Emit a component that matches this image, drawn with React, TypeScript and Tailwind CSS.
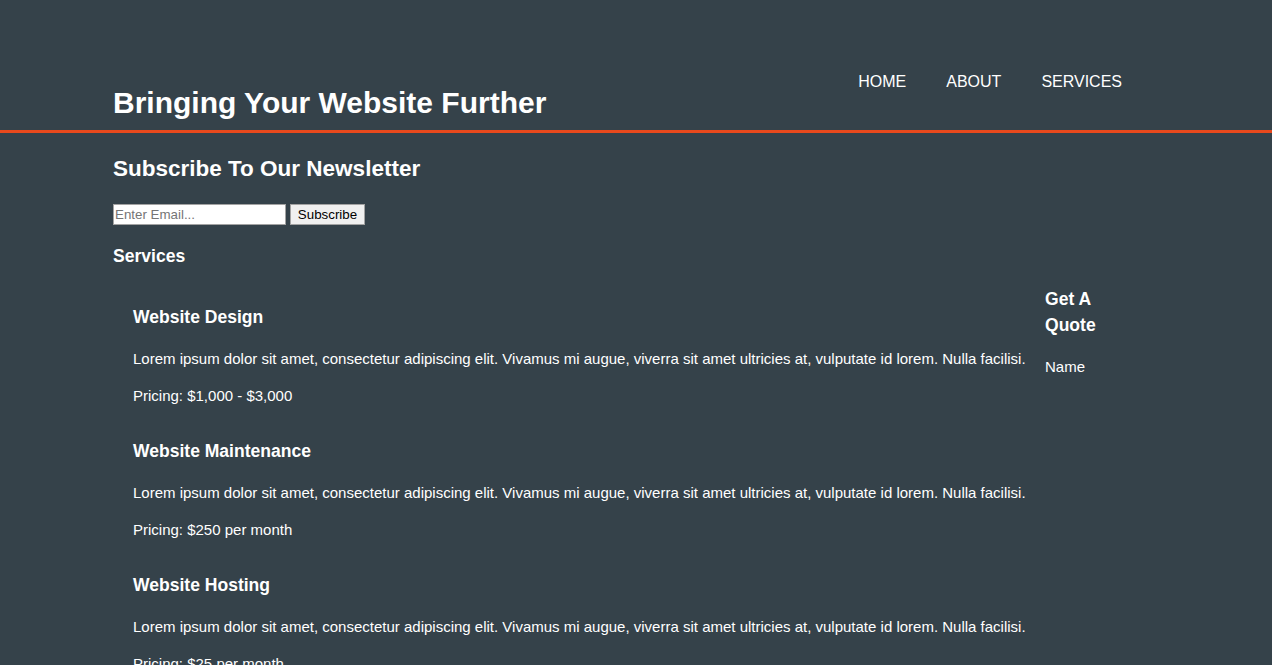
import React from "react";

const services = [
  { title: "Website Design", price: "Pricing: $1,000 - $3,000" },
  { title: "Website Maintenance", price: "Pricing: $250 per month" },
  { title: "Website Hosting", price: "Pricing: $25 per month" },
];

const lorem =
  "Lorem ipsum dolor sit amet, consectetur adipiscing elit. Vivamus mi augue, viverra sit amet ultricies at, vulputate id lorem. Nulla facilisi.";

export default function App() {
  return (
    <div className="min-h-screen bg-[#35424a] font-['Liberation_Sans',Arial,sans-serif] text-[15px] text-white">
      <header className="h-[133px] border-b-[3px] border-[#e8491d]">
        <div className="ml-[113px] flex w-[1029px] justify-between">
          <h1 className="pt-[84px] text-[30px] font-bold leading-[38px]">
            Bringing Your Website Further
          </h1>
          <nav className="pt-[72px]">
            <ul className="flex text-[16px] uppercase leading-[20px]">
              <li className="px-[20px]">Home</li>
              <li className="px-[20px]">About</li>
              <li className="px-[20px]">Services</li>
            </ul>
          </nav>
        </div>
      </header>

      <div className="ml-[113px] w-[1029px]">
        <h2 className="mt-[22px] text-[22.5px] font-bold leading-[28px]">
          Subscribe To Our Newsletter
        </h2>
        <form className="mt-[21px] flex items-center gap-[4px]">
          <input
            type="email"
            placeholder="Enter Email..."
            className="h-[21px] w-[173px] border border-[#a3a3a3] bg-white px-[1px] text-[13.33px] text-black placeholder:text-[#757575]"
          />
          <button
            type="button"
            className="h-[21px] w-[75px] border border-[#a3a3a3] bg-[#f0f0f0] text-[13.33px] text-black"
          >
            Subscribe
          </button>
        </form>
        <h3 className="mt-[20px] text-[17.55px] font-bold leading-[22px]">Services</h3>

        <div className="mt-[23px] flex">
          <section className="flex-1 pl-[20px]">
            {services.map((s) => (
              <article key={s.title} className="mb-[17px]">
                <h3 className="pt-[16px] text-[17.55px] font-bold leading-[22px]">{s.title}</h3>
                <p className="mt-[20px] leading-[22px]">{lorem}</p>
                <p className="mt-[15px] leading-[22px]">{s.price}</p>
              </article>
            ))}
          </section>
          <aside className="w-[97px]">
            <h3 className="-mt-[4px] text-[17.55px] font-bold leading-[26px]">Get A Quote</h3>
            <label className="mt-[18px] block leading-[22px]">Name</label>
          </aside>
        </div>
      </div>
    </div>
  );
}
